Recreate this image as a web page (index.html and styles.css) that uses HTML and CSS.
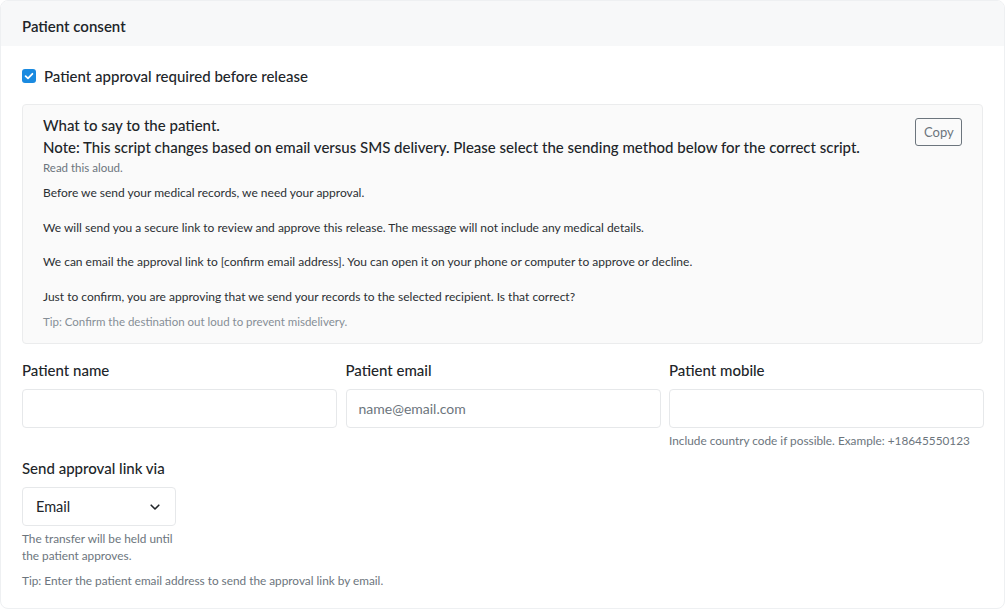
FILE: index.html
```html
<!DOCTYPE html>
<html>
<head>
<meta charset="utf-8">
<link rel="stylesheet" href="styles.css">
</head>
<body>
<div class="card">
  <div class="card-header">Patient consent</div>
  <div class="card-body">
    <label class="check">
      <span class="box"><svg viewBox="0 0 14 14" width="14" height="14"><path d="M3.6 7.2 L6 9.4 L10.4 4.8" fill="none" stroke="#fff" stroke-width="1.8" stroke-linecap="round" stroke-linejoin="round"/></svg></span>
      <span>Patient approval required before release</span>
    </label>

    <div class="script">
      <div class="script-head">
        <div>
          <div class="script-title">What to say to the patient.</div>
          <div class="script-title">Note: This script changes based on email versus SMS delivery. Please select the sending method below for the correct script.</div>
          <div class="muted small">Read this aloud.</div>
        </div>
        <button class="copy">Copy</button>
      </div>
      <p>Before we send your medical records, we need your approval.</p>
      <p>We will send you a secure link to review and approve this release. The message will not include any medical details.</p>
      <p>We can email the approval link to [confirm email address]. You can open it on your phone or computer to approve or decline.</p>
      <p>Just to confirm, you are approving that we send your records to the selected recipient. Is that correct?</p>
      <div class="tip">Tip: Confirm the destination out loud to prevent misdelivery.</div>
    </div>

    <div class="fields">
      <div class="field">
        <div class="label">Patient name</div>
        <div class="input"></div>
      </div>
      <div class="field">
        <div class="label">Patient email</div>
        <div class="input"><span class="ph">name@email.com</span></div>
      </div>
      <div class="field">
        <div class="label">Patient mobile</div>
        <div class="input"></div>
        <div class="help">Include country code if possible. Example: +18645550123</div>
      </div>
    </div>

    <div class="send">
      <div class="label">Send approval link via</div>
      <div class="select">
        <span>Email</span>
        <svg viewBox="0 0 12 12" width="12" height="12"><path d="M2.2 4.2 L6 8 L9.8 4.2" fill="none" stroke="#212529" stroke-width="1.6" stroke-linecap="round" stroke-linejoin="round"/></svg>
      </div>
      <div class="help narrow">The transfer will be held until the patient approves.</div>
      <div class="help tip2">Tip: Enter the patient email address to send the approval link by email.</div>
    </div>
  </div>
</div>
</body>
</html>
```
FILE: styles.css
```css
* { box-sizing: border-box; }
html, body { margin: 0; padding: 0; background: #fff; }
body {
  font-family: Lato, "Noto Sans", sans-serif;
  color: #212529;
  width: 1008px;
  height: 610px;
  overflow: hidden;
}
.card {
  width: 1005px;
  height: 609px;
  border: 1px solid #eef0f2;
  border-radius: 8px;
  overflow: hidden;
}
.card-header {
  height: 45px;
  background: #f7f8f9;
  padding: 5px 21px 0 21px;
  display: flex;
  align-items: center;
  font-size: 15px;
  font-weight: 600;
}
.card-body {
  padding: 21px 21px 0 21px;
}
.check {
  display: flex;
  align-items: center;
  gap: 8px;
  font-size: 15px;
  font-weight: 500;
  height: 18px;
}
.box {
  width: 14px;
  height: 14px;
  border-radius: 3px;
  background: #1a8ae0;
  display: inline-flex;
}
.script {
  margin-top: 19px;
  background: #fafafa;
  border: 1px solid #ebeced;
  border-radius: 4px;
  padding: 9px 20px 14px 20px;
  height: 240px;
}
.script-head {
  display: flex;
  justify-content: space-between;
  align-items: flex-start;
}
.script-title {
  font-size: 15px;
  font-weight: 500;
  line-height: 22px;
}
.muted { color: #6c757d; }
.small { font-size: 11.5px; line-height: 16px; margin-top: 2px; }
.copy {
  margin-top: 4px;
  font-family: inherit;
  font-size: 13px;
  color: #6c757d;
  background: transparent;
  border: 1px solid #6c757d;
  border-radius: 3px;
  padding: 0 8px;
  height: 28px;
  width: 47px;
}
.script p {
  margin: 0;
  font-size: 12px;
  line-height: 16px;
  margin-top: 18.5px;
  color: #2b2f33;
}
.script p:first-of-type { margin-top: 9px; }
.tip {
  margin-top: 10px;
  font-size: 11.5px;
  color: #868e96;
}
.fields {
  display: grid;
  grid-template-columns: 315px 315px 315px;
  column-gap: 8.5px;
  margin-top: 16px;
}
.label {
  font-size: 15px;
  font-weight: 500;
  line-height: 20px;
  margin-bottom: 9px;
}
.input {
  height: 39px;
  border: 1px solid #e6e8ea;
  border-radius: 4px;
  background: #fff;
  display: flex;
  align-items: center;
  padding: 0 12px;
}
.ph { color: #6c757d; font-size: 14px; }
.help {
  font-size: 11.8px;
  color: #6c757d;
  line-height: 17px;
  margin-top: 4px;
}
.send { margin-top: 9px; }
.select {
  width: 154px;
  height: 39px;
  border: 1px solid #e6e8ea;
  border-radius: 4px;
  display: flex;
  align-items: center;
  justify-content: space-between;
  padding: 0 14px 0 13px;
  font-size: 14.5px;
}
.narrow { width: 160px; margin-top: 4px; }
.tip2 { margin-top: 8px; }
```
